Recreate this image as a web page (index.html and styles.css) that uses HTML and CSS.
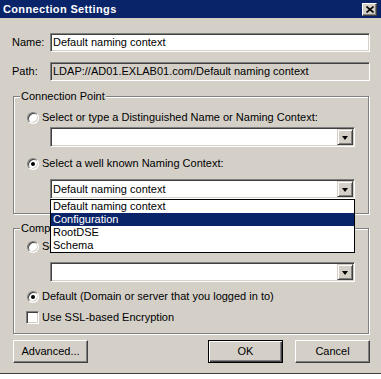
FILE: index.html
```html
<!DOCTYPE html>
<html>
<head>
<meta charset="utf-8">
<title>Connection Settings</title>
<link rel="stylesheet" href="styles.css">
</head>
<body>
<div class="dialog">
  <div class="titlebar">
    <span class="title">Connection Settings</span>
    <span class="close"><svg width="8" height="7" viewBox="0 0 8 7"><path d="M0.5 0.5 L7.5 6.5 M7.5 0.5 L0.5 6.5" stroke="#000" stroke-width="1.6" fill="none"/></svg></span>
  </div>
  <div class="content">
    <div class="row">
      <span class="lbl">Name:</span>
      <div class="field">Default naming context</div>
    </div>
    <div class="row path-row">
      <span class="lbl">Path:</span>
      <div class="field ro">LDAP://AD01.EXLAB01.com/Default naming context</div>
    </div>

    <fieldset class="group g1">
      <legend>Connection Point</legend>
      <div class="opt"><span class="radio"></span><span>Select or type a Distinguished Name or Naming Context:</span></div>
      <div class="combo c1"><span class="combo-text"></span><span class="arrow-btn"><span class="tri"></span></span></div>
      <div class="opt o2"><span class="radio on"></span><span>Select a well known Naming Context:</span></div>
      <div class="combo c2">
        <span class="combo-text">Default naming context</span><span class="arrow-btn"><span class="tri"></span></span>
        <ul class="list">
          <li>Default naming context</li>
          <li class="sel">Configuration</li>
          <li>RootDSE</li>
          <li>Schema</li>
        </ul>
      </div>
    </fieldset>

    <fieldset class="group g2">
      <legend>Computer</legend>
      <div class="opt"><span class="radio"></span><span>Select or type a domain or server: (Server | Domain [:port])</span></div>
      <div class="combo c3"><span class="combo-text"></span><span class="arrow-btn"><span class="tri"></span></span></div>
      <div class="opt o4"><span class="radio on"></span><span>Default (Domain or server that you logged in to)</span></div>
      <div class="opt o5"><span class="check"></span><span>Use SSL-based Encryption</span></div>
    </fieldset>

    <div class="buttons">
      <div class="btn adv">Advanced...</div>
      <div class="btn ok">OK</div>
      <div class="btn cancel">Cancel</div>
    </div>
  </div>
</div>
</body>
</html>
```

FILE: styles.css
```css
html, body {
  margin: 0;
  padding: 0;
  background: #fff;
}
body {
  font-family: "Liberation Sans", Arial, sans-serif;
  font-size: 11px;
  line-height: 13px;
  color: #000;
}
.dialog {
  width: 381px;
  height: 373px;
  background: #d4d0c8;
  border-bottom: 1px solid #404040;
  display: flex;
  flex-direction: column;
}
.titlebar {
  height: 18px;
  flex: none;
  background: #0a246a;
  color: #fff;
  font-weight: bold;
  display: flex;
  align-items: center;
  justify-content: space-between;
  padding: 0 4px 0 3px;
}
.title {
  font-size: 11px;
  letter-spacing: 0.35px;
}
.close {
  align-self: flex-start;
  margin-top: 3px;
  width: 15px;
  height: 13px;
  box-sizing: border-box;
  background: #d4d0c8;
  border: 1px solid;
  border-color: #fff #404040 #404040 #fff;
  box-shadow: inset -1px -1px #808080;
  display: flex;
  align-items: center;
  justify-content: center;
}
.close svg {
  display: block;
}
.content {
  flex: 1;
  padding: 15px 11px 0 12px;
  display: flex;
  flex-direction: column;
}
.row {
  display: flex;
  align-items: center;
  height: 19px;
}
.path-row {
  margin-top: 10px;
}
.lbl {
  width: 38px;
  flex: none;
}
.field {
  flex: 1;
  height: 19px;
  box-sizing: border-box;
  background: #fff;
  border: 1px solid;
  border-color: #808080 #fff #fff #808080;
  box-shadow: inset 1px 1px #404040, inset -1px -1px #d4d0c8;
  padding: 0 0 0 2px;
  line-height: 17px;
  white-space: nowrap;
  overflow: hidden;
}
.field.ro {
  background: #d4d0c8;
}
.group {
  margin: 9px 1px 0 1px;
  padding: 8px 13px 14px 13px;
  border: 1px solid #808080;
  box-shadow: inset 1px 1px #fff, 1px 1px #fff;
  min-width: 0;
}
.g2 {
  margin-top: 8px;
  padding-top: 5px;
  padding-bottom: 9px;
}
legend {
  padding: 0 1px;
  margin-left: -7px;
  line-height: 13px;
  background: #d4d0c8;
}
.opt {
  display: flex;
  align-items: center;
  height: 13px;
  white-space: nowrap;
}
.o2 {
  margin-top: 10px;
}
.o4 {
  margin-top: 8px;
}
.o5 {
  margin-top: 8px;
}
.radio {
  flex: none;
  width: 12px;
  height: 12px;
  box-sizing: border-box;
  border-radius: 50%;
  background: #fff;
  border: 1px solid;
  border-color: #808080 #fff #fff #808080;
  box-shadow: inset 1px 1px #404040, inset -1px -1px #d4d0c8;
  margin-right: 3px;
  position: relative;
}
.radio.on::after {
  content: "";
  position: absolute;
  left: 3px;
  top: 3px;
  width: 4px;
  height: 4px;
  border-radius: 50%;
  background: #000;
}
.check {
  flex: none;
  width: 13px;
  height: 13px;
  box-sizing: border-box;
  background: #fff;
  border: 1px solid;
  border-color: #808080 #fff #fff #808080;
  box-shadow: inset 1px 1px #404040, inset -1px -1px #d4d0c8;
  margin-left: -1px;
  margin-right: 3px;
}
.combo {
  margin-left: 23px;
  height: 20px;
  box-sizing: border-box;
  padding: 1px;
  background: #fff;
  border: 1px solid;
  border-color: #808080 #fff #fff #808080;
  box-shadow: inset 1px 1px #404040, inset -1px -1px #d4d0c8;
  display: flex;
  align-items: center;
  position: relative;
}
.c1 {
  margin-top: 3px;
}
.c2 {
  margin-top: 9px;
}
.c3 {
  margin-top: 9px;
}
.combo-text {
  flex: 1;
  padding-left: 1px;
  white-space: nowrap;
  overflow: hidden;
}
.arrow-btn {
  flex: none;
  width: 16px;
  height: 16px;
  box-sizing: border-box;
  background: #d4d0c8;
  border: 1px solid;
  border-color: #d4d0c8 #404040 #404040 #d4d0c8;
  box-shadow: inset 1px 1px #fff, inset -1px -1px #808080;
  display: flex;
  align-items: center;
  justify-content: center;
}
.tri {
  width: 0;
  height: 0;
  border-left: 3.5px solid transparent;
  border-right: 3.5px solid transparent;
  border-top: 4px solid #000;
  margin-top: 1px;
}
.list {
  position: absolute;
  left: -1px;
  top: calc(100% + 1px);
  width: 305px;
  height: 54px;
  box-sizing: border-box;
  margin: 0;
  padding: 0;
  list-style: none;
  background: #fff;
  border: 1px solid #000;
  z-index: 10;
}
.list li {
  height: 13px;
  line-height: 13px;
  padding-left: 2px;
  white-space: nowrap;
}
.list li.sel {
  background: #0a246a;
  color: #fff;
}
.buttons {
  display: flex;
  margin-top: 6px;
}
.btn {
  width: 75px;
  height: 23px;
  box-sizing: border-box;
  background: #d4d0c8;
  border: 1px solid;
  border-color: #fff #404040 #404040 #fff;
  box-shadow: inset -1px -1px #808080;
  display: flex;
  align-items: center;
  justify-content: center;
}
.adv {
  margin-left: 1px;
}
.ok {
  margin-left: auto;
  border-color: #000;
  box-shadow: inset 1px 1px #fff, inset -1px -1px #404040, inset -2px -2px #808080;
}
.cancel {
  margin-left: 12px;
}
```
